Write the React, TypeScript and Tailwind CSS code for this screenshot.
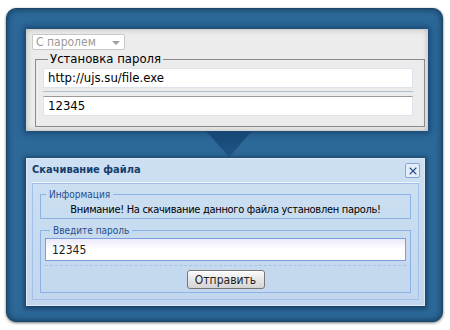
import { X } from 'lucide-react'

const font = { fontFamily: '"DejaVu Sans Condensed", "DejaVu Sans", "Liberation Sans", sans-serif' }

function Triangle() {
  return (
    <svg width="46" height="27" viewBox="0 0 46 27" className="block">
      <defs>
        <linearGradient id="tri" x1="0" y1="0" x2="0" y2="1">
          <stop offset="0" stopColor="#164673" />
          <stop offset="1" stopColor="#1f5688" />
        </linearGradient>
      </defs>
      <polygon points="0,0 46,0 23,26" fill="url(#tri)" />
    </svg>
  )
}

export default function App() {
  return (
    <div className="w-[450px] h-[330px] bg-white pt-[8px] pl-[6px]" style={font}>
      <div className="w-[437px] h-[314px] rounded-[10px] bg-[#2c6898] border border-[#1b4668] shadow-[0_1px_3px_rgba(0,0,0,0.55),inset_0_0_6px_rgba(10,40,70,0.8)] pl-[19px] pt-[20px] flex flex-col">
        {/* верхняя панель */}
        <div className="w-[402px] h-[102px] bg-[#ececec] shadow-[0_0_6px_2px_rgba(15,55,95,0.75),inset_0_0_6px_rgba(0,0,0,0.25)] pl-[6px] pt-[5px] flex flex-col">
          <div className="w-[93px] h-[16px] bg-white border border-[#c8c8c8] rounded-[2px] flex items-center justify-between pl-[3px] pr-[4px]">
            <span className="text-[12px] leading-none text-[#9a9a9a]">С паролем</span>
            <span className="w-0 h-0 border-l-[4px] border-r-[4px] border-t-[4px] border-l-transparent border-r-transparent border-t-[#a0a0a0] mt-[2px]" />
          </div>
          <fieldset className="mt-[1px] ml-[3px] w-[390px] h-[76px] border border-[#8a8a8a] pl-[7px] pr-[11px]">
            <legend className="text-[13px] leading-[16px] text-black px-[2px] ml-[5px]">Установка пароля</legend>
            <div className="mt-[1px] h-[20px] bg-white border border-[#dde3ea] flex items-center pl-[4px] text-[13px] text-black">
              http://ujs.su/file.exe
            </div>
            <div className="mt-[3px] h-[1px] bg-[#a9bfd6]" />
            <div className="mt-[4px] h-[20px] bg-white border border-[#dde3ea] border-t-[#9a9a9a] flex items-center pl-[4px] text-[13px] text-black">
              12345
            </div>
          </fieldset>
        </div>

        <div className="w-[402px] h-[27px] flex justify-center pl-[3px]">
          <Triangle />
        </div>

        {/* диалог */}
        <div className="w-[399px] h-[148px] bg-gradient-to-b from-[#cde0f3] to-[#c2d7ed] border border-[#dfeaf6] shadow-[0_1px_4px_2px_rgba(10,40,70,0.6)] flex flex-col px-[5px]">
          <div className="h-[23px] flex items-center justify-between">
            <span className="text-[11px] font-bold text-[#173d6b]">Скачивание файла</span>
            <div className="w-[15px] h-[15px] rounded-[2px] border border-[#86a6d3] bg-[#e3eefa] flex items-center justify-center mr-[-1px]">
              <X size={12} strokeWidth={2.2} className="text-[#2a4f88]" />
            </div>
          </div>
          <div className="h-[1px] bg-[#edf4fc]" />
          <div className="h-[117px] border border-[#a3c1e8] px-[7px] pt-[4px] flex flex-col">
            <fieldset className="h-[31px] border border-[#8db2e6] text-center">
              <legend className="text-[10px] leading-[13px] text-[#234f8d] px-[3px] ml-[5px] text-left">Информация</legend>
              <div className="text-[11px] leading-[14px] tracking-[-0.3px] text-black mt-[2px]">
                Внимание! На скачивание данного файла установлен пароль!
              </div>
            </fieldset>
            <fieldset className="mt-[5px] h-[69px] border border-[#8db2e6] px-[4px]">
              <legend className="text-[10px] leading-[13px] text-[#234f8d] px-[3px] ml-[5px]">Введите пароль</legend>
              <div className="mt-[1px] h-[23px] bg-gradient-to-b from-[#ece8fb] via-white to-white border border-[#7a9fdb] flex items-center pl-[6px] text-[12px] text-[#222]">
                12345
              </div>
              <div className="mt-[4px] border-t border-dashed border-[#a9c4ea]" />
              <div className="flex justify-center mt-[4px]">
                <button className="w-[78px] h-[19px] rounded-[3px] border border-[#777] bg-gradient-to-b from-[#fbfbfb] to-[#d4d4d4] text-[12px] leading-none text-[#222] shadow-[inset_0_1px_0_white]">
                  Отправить
                </button>
              </div>
            </fieldset>
          </div>
        </div>
      </div>
    </div>
  )
}
